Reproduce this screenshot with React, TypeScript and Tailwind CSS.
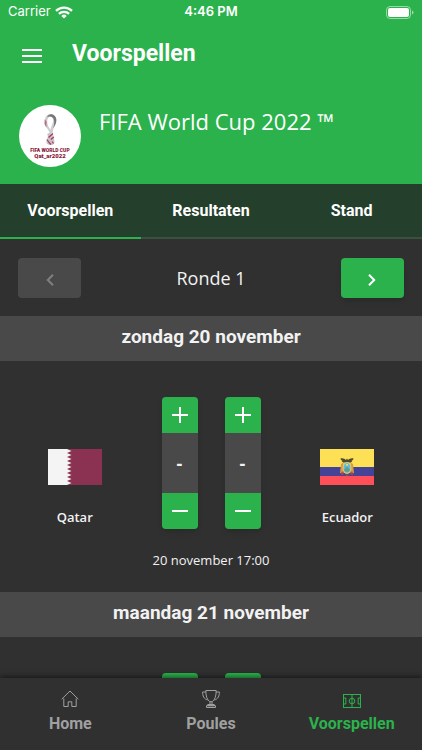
import { useState } from "react";
import clsx from "clsx";

const Wifi = () => (
  <svg viewBox="0 0 18 13" className="h-[13px] w-[18px]" fill="none" stroke="white" strokeWidth="2.3">
    <path d="M1 4.9a11.4 11.4 0 0 1 16 0" />
    <path d="M3.9 7.9a7.2 7.2 0 0 1 10.2 0" />
    <path d="M9 12.6 6.3 9.9a3.9 3.9 0 0 1 5.4 0z" fill="white" stroke="none" />
  </svg>
);

const Battery = () => (
  <svg viewBox="0 0 28 13" className="h-[13px] w-7" fill="none">
    <rect x="0.5" y="0.5" width="24" height="12" rx="3.5" stroke="white" strokeOpacity="0.5" />
    <rect x="2" y="2" width="21" height="9" rx="2" fill="white" />
    <path d="M26 4.5q1.5.6 1.5 2t-1.5 2z" fill="white" fillOpacity="0.55" />
  </svg>
);

const CupLogo = () => (
  <svg viewBox="0 0 62 62" className="size-[62px] shrink-0 rounded-full bg-white" role="img" aria-label="Qatar 2022">
    <path
      d="M25.500 17c0-4.800 2.800-8 6.300-8 4 0 6.200 3.800 5.200 8-.9 3.800-3.600 6.500-3.200 11l-3 .5c-.4-4-5.300-6-5.300-11.500z"
      fill="#cfccce"
    />
    <path
      d="M28.300 17.500c-.2-3.600 1.400-5.900 3.200-5.900s3 2.300 2.500 5.100c-.6 3.200-2.300 5.300-2.500 8.300-1-2.500-3-4-3.200-7.500z"
      fill="white"
    />
    <path d="M28 12c1.500-2.500 3.800-3.300 6-2.300 3.300 1.500 4 5.200 2.900 8.500l-2.500 5.300c.5-3.500 1.200-6 .6-8.500-.6-3-3.500-4.500-7-3z" fill="#77757a" />
    <path d="M25.800 14.500l-.2 4.500 1.700 3.500.2-6z" fill="#b36b84" />
    <path d="M28.300 29c1.500-1.600 5-1.200 6 1.200l1.200 6c.3 2-1.200 3.800-3.300 3.800s-4.700-.8-4.900-3.300c-.1-2.200 2.500-3.700 1-7.700z" fill="#c9c3c8" />
    <path d="M34 28.500l-4.500 4M34.800 32l-3 2.500M28 34.500l2 3M33 36.500l1.500 2M30 37.500l2 2" stroke="#a33a5e" strokeWidth="1.2" />
    <text
      x="31"
      y="47"
      textAnchor="middle"
      className="fill-[#8a1538] font-['Roboto',sans-serif] text-[5px] font-black"
    >
      FIFA WORLD CUP
    </text>
    <text
      x="31"
      y="53"
      textAnchor="middle"
      className="fill-[#8a1538] font-['Roboto',sans-serif] text-[6px] font-black"
    >
      Qat_ar2022
    </text>
  </svg>
);

const QatarFlag = () => (
  <svg viewBox="0 0 54 36" className="h-9 w-[54px]" aria-hidden="true">
    <rect width="54" height="36" fill="#8b3252" />
    <path
      d="M0 0h19l4.500 2-4.500 2 4.500 2-4.500 2 4.500 2-4.500 2 4.500 2-4.500 2 4.500 2-4.500 2 4.500 2-4.500 2 4.500 2-4.500 2 4.500 2-4.500 2 4.500 2-4.500 2H0z"
      fill="#f4f4f4"
    />
  </svg>
);

const EcuadorFlag = () => (
  <svg viewBox="0 0 54 36" className="h-9 w-[54px]" aria-hidden="true">
    <rect width="54" height="18" fill="#fde055" />
    <rect y="18" width="54" height="9" fill="#434398" />
    <rect y="27" width="54" height="9" fill="#ff4f58" />
    <path d="M21 15l2.500-1.500v11L20 24zM33 15l-2.500-1.500v11L34 24z" fill="#d99a45" />
    <path d="M22 22l-1.500 4 3.500-.5zM32 22l1.500 4-3.500-.5z" fill="#b63d45" />
    <path
      d="M20.500 9.500c2-.8 4 .2 5.500 1.500l1-1.500 1 1.500c1.500-1.300 3.500-2.300 5.500-1.500-.3 1.500-1 2-2 2.300l.8.400-1.500 1.300h-7.600l-1.500-1.300.8-.4c-1-.3-1.700-.8-2-2.300z"
      fill="#4d4934"
    />
    <ellipse cx="27" cy="19" rx="4.500" ry="6" fill="#e8c76b" />
    <ellipse cx="27" cy="19" rx="3.400" ry="4.900" fill="#59bce0" />
    <path d="M24 21 27 17.500l3 3.500a3.200 3.200 0 0 1-6 0z" fill="#5f9f83" />
    <circle cx="27" cy="15.800" r="1" fill="#f5e27a" />
    <path d="M24.500 25.500h5L27 27.500z" fill="#8a5a3a" />
  </svg>
);

const HomeIcon = () => (
  <svg viewBox="0 0 18 18" className="size-[18px]" fill="none" stroke="currentColor" strokeLinejoin="round">
    <path d="M2.800 8.500v8h4.400v-4.700h3.600v4.700h4.400v-8" />
    <path d="M.7 9.200 9 1l8.300 8.200" />
  </svg>
);

const TrophyIcon = () => (
  <svg viewBox="0 0 18 18" className="size-[18px]" fill="none" stroke="currentColor" strokeLinejoin="round">
    <path d="M3.800.5h10.400c0 5-1 9.300-4 11.200H7.800C4.800 9.800 3.800 5.500 3.800.5z" />
    <path d="M3.900 2H.6c0 3.800 1.200 7 5 8M14.100 2h3.300c0 3.800-1.200 7-5 8" />
    <path d="M8 11.700v2.800M10 11.700v2.800M5.700 14.500h6.600v1.200H5.700zM4.500 15.700h9v1.800h-9z" />
  </svg>
);

const PitchIcon = () => (
  <svg viewBox="0 0 18 18" className="size-[18px]" fill="none" stroke="currentColor">
    <rect x="0.5" y="4.500" width="17" height="13" />
    <path d="M9 4.500v13M.5 8h2.300v6H.5M17.500 8h-2.300v6h2.300" />
    <circle cx="9" cy="11" r="2.800" />
  </svg>
);

const Stepper = ({ label }: { label: string }) => {
  const [score, setScore] = useState<number | null>(null);

  return (
    <div className="flex w-9 flex-col overflow-hidden rounded-[4px] bg-[#494949] shadow-md">
      <button
        aria-label={`${label} plus`}
        onClick={() => setScore((score ?? -1) + 1)}
        className="flex h-9 items-center justify-center bg-[#2bb24c]"
      >
        <svg viewBox="0 0 16 16" className="size-4" stroke="white" strokeWidth="2">
          <path d="M8 0v16M0 8h16" />
        </svg>
      </button>
      <output className="flex h-[60px] items-center justify-center text-lg font-bold">{score ?? "-"}</output>
      <button
        aria-label={`${label} min`}
        onClick={() => setScore(score ? score - 1 : null)}
        className="flex h-9 items-center justify-center bg-[#2bb24c]"
      >
        <svg viewBox="0 0 16 16" className="size-4" stroke="white" strokeWidth="2">
          <path d="M0 8h16" />
        </svg>
      </button>
    </div>
  );
};

const Match = ({ date }: { date: string }) => (
  <article className="pt-9 pb-5">
    <div className="grid grid-cols-[1fr_auto_1fr] items-end">
      <div className="flex flex-col items-center gap-5">
        <QatarFlag />
        <span className="text-[13px] leading-6 font-semibold">Qatar</span>
      </div>
      <div className="flex gap-[27px] px-3">
        <Stepper label="Qatar" />
        <Stepper label="Ecuador" />
      </div>
      <div className="flex flex-col items-center gap-5">
        <EcuadorFlag />
        <span className="text-[13px] leading-6 font-semibold">Ecuador</span>
      </div>
    </div>
    <p className="mt-[19px] text-center text-[13px] leading-6">{date}</p>
  </article>
);

const DayTitle = ({ children }: { children: string }) => (
  <h2 className="bg-[#494949] pt-[9px] pb-3 text-center font-['Roboto',sans-serif] text-[19px] leading-6 font-bold">
    {children}
  </h2>
);

const tabs = ["Voorspellen", "Resultaten", "Stand"];

const navItems = [
  { name: "Home", icon: <HomeIcon /> },
  { name: "Poules", icon: <TrophyIcon /> },
  { name: "Voorspellen", icon: <PitchIcon /> },
];

const App = () => {
  const [tab, setTab] = useState("Voorspellen");

  return (
    <div className="flex h-screen flex-col bg-[#303030] font-['Open_Sans',sans-serif] text-[#f2f2f2]">
      <header className="bg-[#2bb24c] pb-[17px] text-white">
        <div className="grid h-6 grid-cols-3 items-center px-2 font-['Inter',sans-serif] text-[13px]">
          <div className="flex items-center gap-1">
            Carrier <Wifi />
          </div>
          <div className="text-center font-semibold">4:46 PM</div>
          <div className="flex justify-end">
            <Battery />
          </div>
        </div>
        <div className="flex h-[60px] items-center gap-[30px] px-[22px]">
          <button aria-label="Menu">
            <svg viewBox="0 0 20 14" className="mt-1 h-[14px] w-5" stroke="white" strokeWidth="2">
              <path d="M0 1h20M0 7h20M0 13h20" />
            </svg>
          </button>
          <h1 className="font-['Roboto',sans-serif] text-[23px] leading-8 font-bold">Voorspellen</h1>
        </div>
        <div className="mt-[21px] flex gap-[18px] px-[19px]">
          <CupLogo />
          <p className="text-[22px] leading-8">FIFA World Cup 2022 ™</p>
        </div>
      </header>

      <div role="tablist" className="grid grid-cols-3 bg-[#24402c] font-['Roboto',sans-serif] text-white">
        {tabs.map((t) => (
          <button
            key={t}
            role="tab"
            aria-selected={t === tab}
            onClick={() => setTab(t)}
            className={clsx(
              "h-[55px] border-b-2 text-base font-bold",
              t === tab ? "border-[#2bb24c]" : "border-[#3b5041]"
            )}
          >
            {t}
          </button>
        ))}
      </div>

      <main className="min-h-0 flex-1 overflow-y-auto [scrollbar-width:none]">
        <div className="flex items-center justify-between px-[18px] pt-[19px] pb-[18px]">
          <button
            disabled
            aria-label="Vorige ronde"
            className="flex h-10 w-[63px] items-center justify-center rounded-[4px] bg-[#494949] text-[#808080]"
          >
            <svg viewBox="0 0 8 12" className="mt-1 h-3 w-2" fill="none" stroke="currentColor" strokeWidth="2">
              <path d="M7 .8 1.800 6 7 11.200" />
            </svg>
          </button>
          <span className="text-lg">Ronde 1</span>
          <button
            aria-label="Volgende ronde"
            className="flex h-10 w-[63px] items-center justify-center rounded-[4px] bg-[#2bb24c] text-white shadow-md"
          >
            <svg viewBox="0 0 8 12" className="mt-1 h-3 w-2" fill="none" stroke="currentColor" strokeWidth="2">
              <path d="M1 .8 6.200 6 1 11.200" />
            </svg>
          </button>
        </div>
        <DayTitle>zondag 20 november</DayTitle>
        <Match date="20 november 17:00" />
        <DayTitle>maandag 21 november</DayTitle>
        <div className="flex justify-center gap-[27px] pt-9">
          <Stepper label="Thuis" />
          <Stepper label="Uit" />
        </div>
      </main>

      <nav className="z-10 grid h-[72px] grid-cols-3 bg-[#303030] font-['Roboto',sans-serif] text-base font-bold shadow-[0_-1px_6px_rgba(0,0,0,0.6)]">
        {navItems.map((item) => (
          <a
            key={item.name}
            href="#"
            className={clsx(
              "flex flex-col items-center gap-1 pt-3",
              item.name === "Voorspellen" ? "text-[#2bb24c]" : "text-[#a0a0a0]"
            )}
          >
            {item.icon}
            {item.name}
          </a>
        ))}
      </nav>
    </div>
  );
};

export default App;
